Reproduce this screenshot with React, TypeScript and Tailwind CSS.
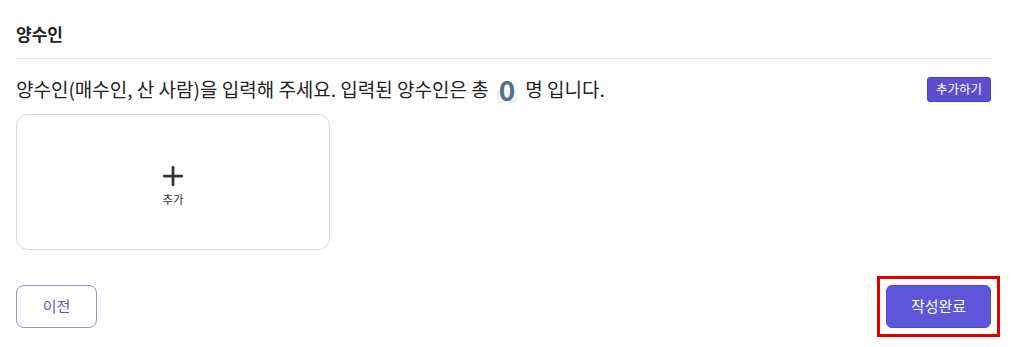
import { Plus } from "lucide-react";

export default function App() {
  const buyers: string[] = [];

  return (
    <div
      className="w-[1014px] h-[347px] bg-white text-[#222]"
      style={{ fontFamily: '"Noto Sans CJK KR", "Noto Sans", sans-serif' }}
    >
      <div className="w-[976px] ml-4 pt-[22px]">
        {/* Section title */}
        <h2 className="text-[17px] font-bold leading-[24px] pb-[12px] border-b border-[#e5e5e5]">
          양수인
        </h2>

        {/* Description + add button */}
        <div className="flex items-center justify-between mt-[15px] h-[30px]">
          <p className="flex items-center text-[19px] leading-[30px] text-[#222]">
            양수인(매수인, 산 사람)을 입력해 주세요. 입력된 양수인은 총
            <span className="mx-[8px] px-[2px] text-[28px] font-bold leading-[28px] text-[#557089] bg-[linear-gradient(transparent_55%,#edf3f6_55%)]">
              {buyers.length}
            </span>
            명 입니다.
          </p>
          <button className="mr-[1px] h-[25px] px-[8px] rounded-[3px] bg-[#5a4fd0] border border-[#4a3fc0] text-white text-[12.5px] leading-none">
            추가하기
          </button>
        </div>

        {/* Add card */}
        <button className="mt-[10px] w-[314px] h-[136px] rounded-[12px] border border-[#d9d9d9] bg-white flex flex-col items-center justify-center">
          <Plus size={30} strokeWidth={2.2} className="text-[#333] mt-[2px]" />
          <span className="text-[11.5px] leading-[14px] text-[#333] mt-[1px]">추가</span>
        </button>

        {/* Footer buttons */}
        <div className="flex items-center justify-between mt-[26px]">
          <button className="w-[81px] h-[43px] rounded-[8px] border border-[#918bf2] text-[#5a52d4] text-[15px]">
            이전
          </button>
          <div className="border-[3px] border-[#e00000] p-[6px] -mr-[8px]">
            <button className="w-[105px] h-[43px] rounded-[6px] bg-[#5d56d8] border border-[#5149cc] text-white text-[15px]">
              작성완료
            </button>
          </div>
        </div>
      </div>
    </div>
  );
}
